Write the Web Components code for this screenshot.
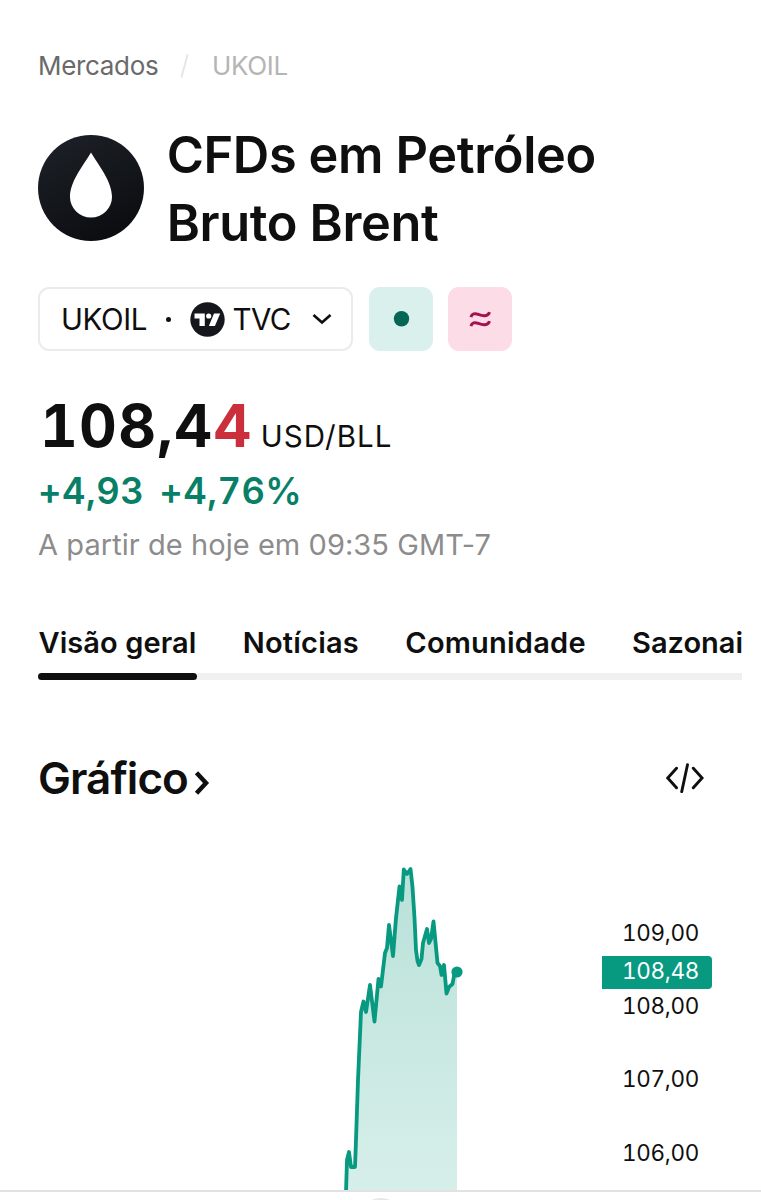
<!DOCTYPE html>
<html lang="pt">
<head>
<meta charset="utf-8">
<meta name="viewport" content="width=device-width">
<title>UKOIL</title>
<style>
  html, body { margin: 0; background: #fff; }
  body {
    height: 1200px;
    overflow: hidden;
    font-family: Inter, "Liberation Sans", sans-serif;
    color: #0f0f0f;
  }
</style>
</head>
<body>
<symbol-page>
  <bread-crumbs slot="crumbs" parent="Mercados" current="UKOIL"></bread-crumbs>
  <symbol-header slot="header">CFDs em Petróleo<br>Bruto Brent</symbol-header>
  <exchange-bar slot="header" symbol="UKOIL" exchange="TVC"></exchange-bar>
  <price-quote slot="header" price="108,4" tick="4" unit="USD/BLL" change="+4,93" percent="+4,76%">A partir de hoje em 09:35 GMT-7</price-quote>
  <tab-strip>
    <tab-item selected style="letter-spacing:.08px">Visão geral</tab-item>
    <tab-item>Notícias</tab-item>
    <tab-item>Comunidade</tab-item>
    <tab-item style="letter-spacing:0">Sazonai</tab-item>
  </tab-strip>
  <section-title>Gráfico</section-title>
  <price-chart last="108,48"></price-chart>
</symbol-page>
<bottom-sheet></bottom-sheet>

<script>
class SymbolPage extends HTMLElement {
  constructor() {
    super();
    this.attachShadow({ mode: 'open' }).innerHTML = `
      <style>
        :host {
          display: block;
          box-sizing: border-box;
          height: 1190px;
          overflow: hidden;
          padding: 45px 19px 0 38px;
        }
      </style>
      <slot name="crumbs"></slot>
      <slot name="header"></slot>
      <slot></slot>
    `;
  }
}

class BreadCrumbs extends HTMLElement {
  constructor() {
    super();
    this.attachShadow({ mode: 'open' }).innerHTML = `
      <style>
        :host {
          display: flex;
          align-items: center;
          height: 41px;
          font-size: 26px;
          line-height: 41px;
          letter-spacing: -0.32px;
          color: #6a6a6a;
        }
        svg { margin: 0 22.5px 0 22px; }
        .current { color: #b5b5b5; }
      </style>
      <span class="parent"></span>
      <svg width="9" height="26" viewBox="0 0 9 26"><path d="M7.6 1.5 1.4 24.5" stroke="#e4e4e4" stroke-width="1.8"/></svg>
      <span class="current"></span>
    `;
  }

  connectedCallback() {
    this.shadowRoot.querySelector('.parent').textContent = this.getAttribute('parent');
    this.shadowRoot.querySelector('.current').textContent = this.getAttribute('current');
  }
}

class SymbolHeader extends HTMLElement {
  constructor() {
    super();
    this.attachShadow({ mode: 'open' }).innerHTML = `
      <style>
        :host {
          display: flex;
          align-items: center;
          gap: 22.7px;
          margin-top: 35px;
          height: 136px;
        }
        svg { flex: none; display: block; margin-top: -2px; }
        h1 {
          margin: 0;
          font-size: 50.5px;
          font-weight: 600;
          line-height: 68px;
          letter-spacing: -0.38px;
          white-space: nowrap;
        }
      </style>
      <svg width="106" height="106" viewBox="0 0 106 106">
        <defs><linearGradient id="g" x1="0.2" y1="0" x2="0.7" y2="1">
          <stop offset="0" stop-color="#1c2127"/><stop offset="1" stop-color="#0b0c10"/>
        </linearGradient></defs>
        <circle cx="53" cy="53" r="53" fill="url(#g)"/>
        <path d="M53 17.500C46 29.500 32 46 32 62a21 20.500 0 0 0 42 0C74 46 60 29.500 53 17.500z" fill="#fff"/>
      </svg>
      <h1><slot></slot></h1>
    `;
  }
}

class ExchangeBar extends HTMLElement {
  constructor() {
    super();
    this.attachShadow({ mode: 'open' }).innerHTML = `
      <style>
        :host { display: flex; gap: 15.5px; margin-top: 30px; height: 64px; }
        .select {
          display: flex;
          align-items: center;
          box-sizing: border-box;
          width: 315px;
          padding-left: 21px;
          border: 2px solid #ebebeb;
          border-radius: 11px;
          font-size: 29.5px;
          line-height: 60px;
          letter-spacing: -0.4px;
        }
        .dot { width: 5px; height: 5px; border-radius: 50%; background: #0f0f0f; margin: 0 19.5px 0 19px; }
        .exchange { margin-left: 7px; letter-spacing: -0.6px; }
        .chevron { margin-left: 21px; }
        .badge { display: block; width: 64px; height: 64px; border-radius: 11px; }
        .open { background: #d9f0ec; }
        .delay { background: #fcdce7; }
      </style>
      <div class="select">
        <span class="symbol"></span>
        <span class="dot"></span>
        <svg width="35" height="35" viewBox="0 0 35 35">
          <circle cx="17.500" cy="17.500" r="17.200" fill="#15171c"/>
          <path d="M4.500 11.500h10.300v12.600H9.500v-7.500h-5z" fill="#fff"/>
          <circle cx="18.700" cy="14" r="2.600" fill="#fff"/>
          <path d="M24 11.500h6.200l-5.300 12.600h-6z" fill="#fff"/>
        </svg>
        <span class="exchange"></span>
        <svg class="chevron" width="20" height="12" viewBox="0 0 20 12"><path d="M1.500 2 10 9.500 18.500 2" fill="none" stroke="#0f0f0f" stroke-width="2.700"/></svg>
      </div>
      <svg class="badge open" viewBox="0 0 64 64"><circle cx="32.500" cy="31.700" r="7.700" fill="#056656"/></svg>
      <svg class="badge delay" viewBox="0 0 64 64">
        <g fill="none" stroke="#a3124f" stroke-width="3">
          <path d="M22.900 30.200c1-3.600 3.800-4.200 7.400-2.800 4.500 1.800 9.800 2.600 11.200-2.300"/>
          <path d="M22.900 39.200c1-3.600 3.800-4.200 7.400-2.800 4.500 1.800 9.800 2.600 11.200-2.300"/>
        </g>
      </svg>
    `;
  }

  connectedCallback() {
    this.shadowRoot.querySelector('.symbol').textContent = this.getAttribute('symbol');
    this.shadowRoot.querySelector('.exchange').textContent = this.getAttribute('exchange');
  }
}

class PriceQuote extends HTMLElement {
  constructor() {
    super();
    this.attachShadow({ mode: 'open' }).innerHTML = `
      <style>
        :host { display: block; margin-top: 40px; white-space: nowrap; }
        .price {
          display: flex;
          align-items: baseline;
          height: 70px;
          padding-left: 2px;
          line-height: 70px;
          font-size: 58.5px;
          font-weight: 700;
          letter-spacing: 1.3px;
          font-variant-numeric: tabular-nums;
        }
        .tick { color: #cc2f3c; }
        .unit { margin-left: 8px; font-size: 29.5px; font-weight: 400; letter-spacing: 1.1px; }
        .change {
          display: flex;
          gap: 15px;
          height: 60px;
          line-height: 60px;
          font-size: 36.3px;
          font-weight: 600;
          letter-spacing: .5px;
          font-variant-numeric: tabular-nums;
          color: #087f67;
        }
        .time { height: 48px; line-height: 48px; font-size: 29px; letter-spacing: .06px; color: #8c8c8c; }
      </style>
      <div class="price"><span class="value"></span><span class="tick"></span><span class="unit"></span></div>
      <div class="change"><span class="abs"></span><span class="percent"></span></div>
      <div class="time"><slot></slot></div>
    `;
  }

  connectedCallback() {
    const fill = (sel, attr) => {
      this.shadowRoot.querySelector(sel).textContent = this.getAttribute(attr);
    };
    fill('.value', 'price');
    fill('.tick', 'tick');
    fill('.unit', 'unit');
    fill('.abs', 'change');
    fill('.percent', 'percent');
  }
}

class TabStrip extends HTMLElement {
  constructor() {
    super();
    this.attachShadow({ mode: 'open' }).innerHTML = `
      <style>
        :host {
          display: flex;
          gap: 45.3px;
          height: 67px;
          margin-top: 44px;
          overflow: hidden;
          background: linear-gradient(#f0f0f0, #f0f0f0) 0 59.500px / 100% 7.500px no-repeat;
        }
      </style>
      <slot></slot>
    `;
  }
}

class TabItem extends HTMLElement {
  constructor() {
    super();
    this.attachShadow({ mode: 'open' }).innerHTML = `
      <style>
        :host {
          display: flex;
          flex: none;
          flex-direction: column;
          justify-content: space-between;
          font-size: 29px;
          font-weight: 600;
          line-height: 60px;
          letter-spacing: .22px;
          white-space: nowrap;
        }
        .label { height: 59px; padding: 0 .5px; }
        .bar { height: 7.500px; border-radius: 4px; }
        :host([selected]) .bar { background: #0f0f0f; }
      </style>
      <div class="label"><slot></slot></div>
      <div class="bar"></div>
    `;
  }
}

class SectionTitle extends HTMLElement {
  constructor() {
    super();
    this.attachShadow({ mode: 'open' }).innerHTML = `
      <style>
        :host { display: flex; align-items: center; height: 60px; margin-top: 68px; padding-right: 38px; }
        h2 { margin: 0; font-size: 44px; font-weight: 600; line-height: 60px; letter-spacing: -.95px; }
        .more { margin: 10px 0 0 6px; }
        .embed { margin: -1px 0 0 auto; }
      </style>
      <h2><slot></slot></h2>
      <svg class="more" width="16" height="24" viewBox="0 0 16 24"><path d="m2.500 1.800 9.500 10.200-9.500 10.200" fill="none" stroke="#0f0f0f" stroke-width="4.500"/></svg>
      <svg class="embed" width="38" height="30" viewBox="0 0 38 30"><path d="M10.500 5.200 1.700 15l8.800 9.800M21.500 1.700l-5.800 27M27.300 5.200l8.800 9.800-8.800 9.800" fill="none" stroke="#0f0f0f" stroke-width="2.900" stroke-linecap="round"/></svg>
    `;
  }
}

// Points of the intraday line, in chart pixels
const LINE = [
  [308, 352], [309, 320], [311, 312], [313, 327], [317, 327], [318, 300], [320, 240],
  [323, 172], [325.5, 161.5], [328, 172], [332, 145], [336.5, 181.5], [340.5, 139],
  [343, 146.5], [347, 113], [349, 108], [351, 85], [355, 116], [358, 78], [361.5, 46.5],
  [364, 60], [365.8, 29.5], [369, 34], [372.5, 29], [374.5, 47], [376.5, 78],
  [378, 110], [379.5, 121], [381, 125], [383.5, 119], [385, 103], [389, 89], [391, 103],
  [393, 99], [395.5, 81.5], [399.5, 123], [402, 126], [403.5, 135], [406, 125],
  [408.5, 153.5], [411, 147], [414.5, 144], [416, 136], [419, 132]
];

class PriceChart extends HTMLElement {
  constructor() {
    super();
    this.attachShadow({ mode: 'open' }).innerHTML = `
      <style>
        :host { display: flex; height: 360px; margin-top: 32px; font-size: 22.5px; letter-spacing: -.35px; font-variant-numeric: tabular-nums; }
        svg { flex: none; }
        .axis { position: relative; flex: none; width: 110px; padding-top: 56px; }
        .axis div { height: 73.200px; line-height: 73.200px; padding-left: 20px; }
        .axis .last {
          position: absolute;
          top: 116px;
          left: 0;
          box-sizing: border-box;
          width: 110px;
          height: 32.500px;
          line-height: 30px;
          border-radius: 0 4px 4px 0;
          background: #089981;
          color: #fff;
        }
      </style>
      <svg width="564" height="360" viewBox="0 0 564 360">
        <defs><linearGradient id="fill" gradientUnits="userSpaceOnUse" x1="0" y1="30" x2="0" y2="360">
          <stop offset="0" stop-color="#b9e1d9"/><stop offset="1" stop-color="#d8efea"/>
        </linearGradient></defs>
        <path class="area" fill="url(#fill)"/>
        <path class="line" fill="none" stroke="#089981" stroke-width="3.800" stroke-linejoin="round"/>
        <circle r="5.600" fill="#089981"/>
      </svg>
      <div class="axis"></div>
    `;
  }

  connectedCallback() {
    const root = this.shadowRoot;
    const d = 'M' + LINE.map(p => p.join(' ')).join('L');
    const [x, y] = LINE[LINE.length - 1];
    root.querySelector('.line').setAttribute('d', d);
    root.querySelector('.area').setAttribute('d', d + 'V360H308z');
    root.querySelector('circle').setAttribute('cx', x);
    root.querySelector('circle').setAttribute('cy', y);

    const axis = root.querySelector('.axis');
    ['109,00', '108,00', '107,00', '106,00'].forEach(label => {
      const div = document.createElement('div');
      div.textContent = label;
      axis.append(div);
    });
    const last = document.createElement('div');
    last.className = 'last';
    last.textContent = this.getAttribute('last');
    axis.append(last);
  }
}

class BottomSheet extends HTMLElement {
  constructor() {
    super();
    this.attachShadow({ mode: 'open' }).innerHTML = `
      <style>
        :host { display: flex; justify-content: center; height: 8px; overflow: hidden; border-top: 2px solid #e2e2e2; }
        i { width: 50px; height: 50px; margin-top: 6px; border-radius: 50%; background: #e6e8e8; }
      </style>
      <i></i>
    `;
  }
}

customElements.define('symbol-page', SymbolPage);
customElements.define('bread-crumbs', BreadCrumbs);
customElements.define('symbol-header', SymbolHeader);
customElements.define('exchange-bar', ExchangeBar);
customElements.define('price-quote', PriceQuote);
customElements.define('tab-strip', TabStrip);
customElements.define('tab-item', TabItem);
customElements.define('section-title', SectionTitle);
customElements.define('price-chart', PriceChart);
customElements.define('bottom-sheet', BottomSheet);
</script>
</body>
</html>
